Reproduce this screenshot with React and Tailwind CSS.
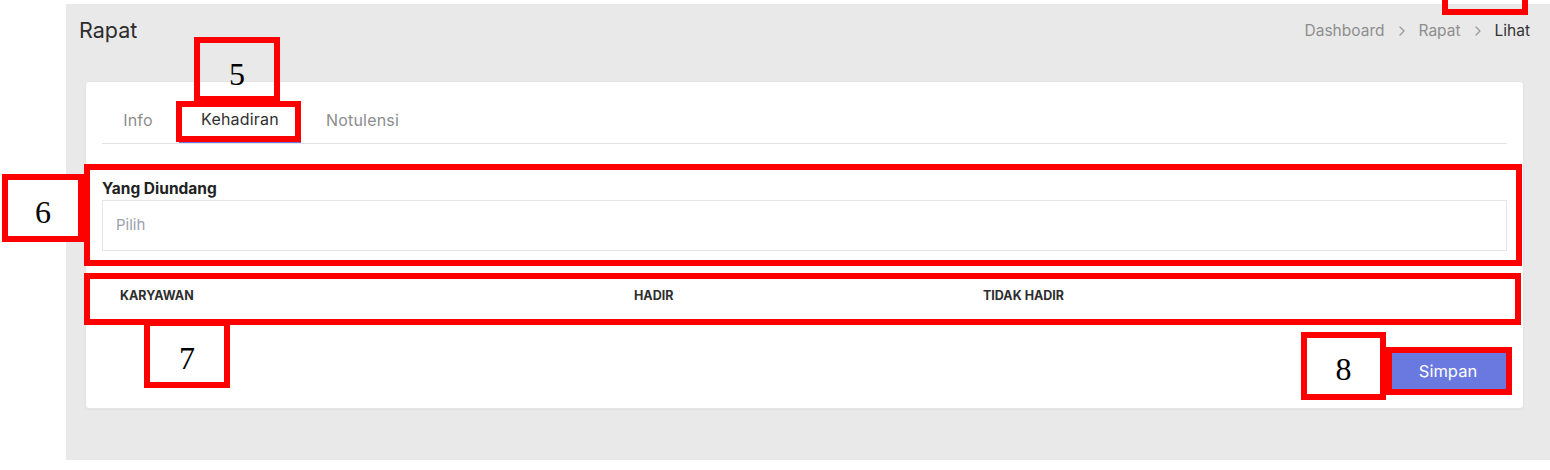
import React from "react";

function Chevron() {
  return (
    <svg width="6" height="10" viewBox="0 0 6 10" className="block">
      <polyline points="1,1 5,5 1,9" fill="none" stroke="#9a9a9a" strokeWidth="1.3" strokeLinecap="round" strokeLinejoin="round" />
    </svg>
  );
}

function Tab({ children, active, className }) {
  return (
    <div
      className={
        "h-[46px] flex items-center justify-center text-[16px] tracking-[0.2px] " +
        (active ? "text-[#2f2f2f] border-b-2 border-[#6777e8] -mb-px " : "text-[#8c8c8c] ") +
        className
      }
    >
      {children}
    </div>
  );
}

function Mark({ className, children }) {
  return (
    <div className={"absolute border-[6px] border-[#ff0000] " + className}>
      {children}
    </div>
  );
}

export default function App() {
  return (
    <div className="relative w-[1550px] h-[470px] bg-white overflow-hidden font-['Inter',sans-serif]">
      <div className="ml-[66px] mt-[4px] h-[456px] bg-[#e9e9e9] flex flex-col">
        <div className="h-[53px] flex items-center justify-between pl-[13px] pr-[20px]">
          <h1 className="text-[21.5px] text-[#2d2d2d] leading-none">Rapat</h1>
          <nav className="flex items-center gap-[14px] text-[15.5px]">
            <span className="text-[#8e8e8e]">Dashboard</span>
            <Chevron />
            <span className="text-[#8e8e8e]">Rapat</span>
            <Chevron />
            <span className="text-[#333333]">Lihat</span>
          </nav>
        </div>
        <div className="ml-[19px] mr-[26px] mt-[24px] bg-white border border-[#e4e4e4] rounded-[4px] shadow-[0_1px_2px_rgba(0,0,0,0.04)] px-[16px] pt-[15px] pb-[17px]">
          <div className="flex border-b border-[#e3e3e3]">
            <Tab className="w-[72px]">Info</Tab>
            <Tab active className="w-[122px] ml-[5px]">Kehadiran</Tab>
            <Tab className="w-[115px] ml-[4px]">Notulensi</Tab>
          </div>
          <div className="mt-[35px] text-[15.5px] font-bold leading-[20px] text-[#222222]">Yang Diundang</div>
          <div className="mt-[1px] h-[51px] border border-[#e6e6e6] bg-white flex items-center px-[13px] text-[15px] text-[#9aa0ac]">
            Pilih
          </div>
          <div className="mt-[24px] h-[42px] grid grid-cols-[514px_349px_1fr] items-center text-[12.5px] font-bold text-[#2e2e2e] uppercase">
            <div className="pl-[18px]">Karyawan</div>
            <div className="pl-[18px]">Hadir</div>
            <div className="pl-[18px]">Tidak Hadir</div>
          </div>
          <div className="mt-[34px] flex justify-end">
            <button className="w-[118px] h-[40px] bg-[#6979e0] text-white text-[16.5px] rounded-[3px]">Simpan</button>
          </div>
        </div>
      </div>

      <Mark className="left-[1442px] top-[-40px] w-[86px] h-[55px]" />
      <Mark className="left-[176px] top-[101px] w-[125px] h-[41px]" />
      <Mark className="left-[194px] top-[37px] w-[86px] h-[65px] flex items-center justify-center pt-[8px]">
        <span className="font-['Liberation_Serif',serif] text-[32px] leading-none text-black">5</span>
      </Mark>
      <Mark className="left-[84px] top-[164px] w-[1438px] h-[102px]" />
      <Mark className="left-[2px] top-[174px] w-[82px] h-[68px] bg-white flex items-center justify-center pt-[8px]">
        <span className="font-['Liberation_Serif',serif] text-[32px] leading-none text-black">6</span>
      </Mark>
      <Mark className="left-[84px] top-[273px] w-[1437px] h-[52px]" />
      <Mark className="left-[144px] top-[320px] w-[86px] h-[68px] bg-white flex items-center justify-center pt-[8px]">
        <span className="font-['Liberation_Serif',serif] text-[32px] leading-none text-black">7</span>
      </Mark>
      <Mark className="left-[1386px] top-[347px] w-[126px] h-[48px]" />
      <Mark className="left-[1301px] top-[332px] w-[85px] h-[68px] bg-white flex items-center justify-center pt-[6px]">
        <span className="font-['Liberation_Serif',serif] text-[32px] leading-none text-black">8</span>
      </Mark>
    </div>
  );
}
